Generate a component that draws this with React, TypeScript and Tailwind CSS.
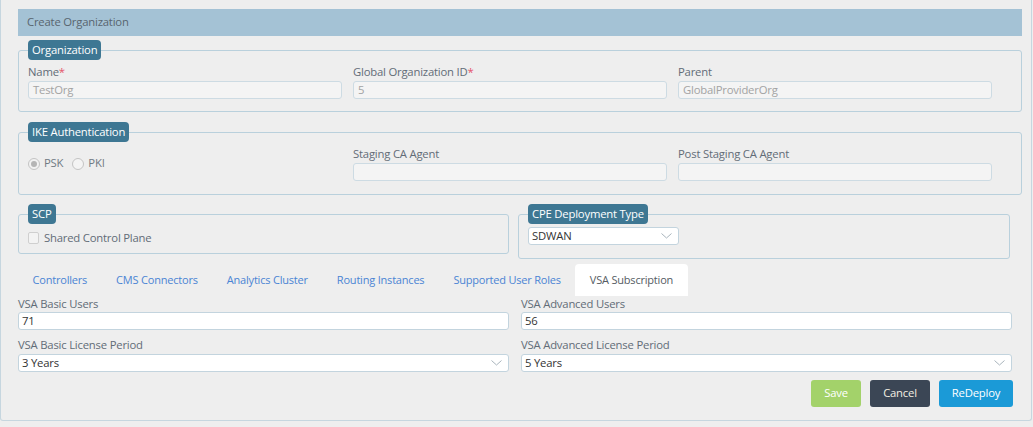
import { ReactNode } from "react";

const Legend = ({ children }: { children: ReactNode }) => (
  <legend className="h-[20px] px-[4px] rounded-[4px] bg-[#3e7793] text-white leading-[20px]">
    {children}
  </legend>
);

const Label = ({ text, required }: { text: string; required?: boolean }) => (
  <div className="h-[16px] leading-[16px] text-[#626c77] whitespace-nowrap">
    {text}
    {required && <span className="text-[#e5546b]">*</span>}
  </div>
);

const Chevron = () => (
  <svg width="11" height="6" viewBox="0 0 11 6" className="shrink-0">
    <polyline points="0.5,0.5 5.5,5 10.5,0.5" fill="none" stroke="#a9b4bc" strokeWidth="1" />
  </svg>
);

const DisabledInput = ({ value }: { value?: string }) => (
  <div className="mt-[1px] h-[18px] rounded-[3px] border border-[#cddbe3] bg-[#f4f4f4] px-[4px] leading-[16px] text-[#a3a3a3]">
    {value}
  </div>
);

const TextInput = ({ value }: { value: string }) => (
  <div className="h-[18px] rounded-[3px] border border-[#c3d4de] bg-white px-[3px] leading-[16px] text-[#333]">
    {value}
  </div>
);

const SelectBox = ({ value, className }: { value: string; className?: string }) => (
  <div
    className={`flex h-[18px] items-center justify-between rounded-[3px] border border-[#c3d4de] bg-white pl-[3px] pr-[6px] leading-[16px] text-[#333] ${className ?? ""}`}
  >
    <span>{value}</span>
    <Chevron />
  </div>
);

const tabs = ["Controllers", "CMS Connectors", "Analytics Cluster", "Routing Instances", "Supported User Roles"];

const App = () => {
  return (
    <div className="h-[427px] w-[1033px] bg-[#eeeeee] font-['Open_Sans',sans-serif] text-[11.3px] tracking-[-0.2px]">
      <div className="h-[421px] w-[1032px] rounded-b-[3px] border-x border-b border-[#c6d6df] pl-[17px] pr-[9px] pt-[9px]">
        <div className="flex h-[27px] items-center bg-[#a4c2d5] pl-[9px] text-[#58656f]">Create Organization</div>

        <fieldset className="mt-[4px] rounded-[3px] border border-[#b9d0dc] px-[9px] pt-[4px] pb-[12px]">
          <Legend>Organization</Legend>
          <div className="flex gap-[11px]">
            <div className="w-[314px]">
              <Label text="Name" required />
              <DisabledInput value="TestOrg" />
            </div>
            <div className="w-[314px]">
              <Label text="Global Organization ID" required />
              <DisabledInput value="5" />
            </div>
            <div className="w-[314px]">
              <Label text="Parent" />
              <DisabledInput value="GlobalProviderOrg" />
            </div>
          </div>
        </fieldset>

        <fieldset className="mt-[10px] rounded-[3px] border border-[#b9d0dc] px-[9px] pt-[4px] pb-[13px]">
          <Legend>IKE Authentication</Legend>
          <div className="flex gap-[11px]">
            <div className="flex w-[314px] items-center gap-[4px] text-[#707a83]">
              <span className="flex h-[12px] w-[12px] items-center justify-center rounded-full border border-[#c4c4c4] bg-[#f2f2f2]">
                <span className="h-[6px] w-[6px] rounded-full bg-[#b5b5b5]" />
              </span>
              <span className="mr-[5px]">PSK</span>
              <span className="h-[12px] w-[12px] rounded-full border border-[#c4c4c4] bg-[#f4f4f4]" />
              <span>PKI</span>
            </div>
            <div className="w-[314px]">
              <Label text="Staging CA Agent" />
              <DisabledInput />
            </div>
            <div className="w-[314px]">
              <Label text="Post Staging CA Agent" />
              <DisabledInput />
            </div>
          </div>
        </fieldset>

        <div className="mt-[9px] flex items-start gap-[9px]">
          <fieldset className="w-[491px] rounded-[3px] border border-[#b9d0dc] px-[9px] pt-[5px] pb-[6px]">
            <Legend>SCP</Legend>
            <div className="flex h-[18px] items-center gap-[5px] text-[#626c77]">
              <span className="h-[12px] w-[11px] rounded-[2px] border border-[#cfcfcf] bg-[#f3f3f3]" />
              <span>Shared Control Plane</span>
            </div>
          </fieldset>
          <fieldset className="w-[492px] rounded-[3px] border border-[#b9d0dc] px-[9px] pt-[3px] pb-[13px]">
            <Legend>CPE Deployment Type</Legend>
            <SelectBox value="SDWAN" className="w-[151px]" />
          </fieldset>
        </div>

        <div className="mt-[5px] flex h-[32px] text-[11px]">
          {tabs.map((t) => (
            <div key={t} className="px-[14.5px] leading-[32px] text-[#4a84d4]">
              {t}
            </div>
          ))}
          <div className="rounded-t-[4px] bg-white px-[14.5px] leading-[32px] text-[#555c63]">VSA Subscription</div>
        </div>

        <div className="flex gap-[12px]">
          <div className="w-[491px]">
            <Label text="VSA Basic Users" />
            <TextInput value="71" />
            <div className="mt-[7px]">
              <Label text="VSA Basic License Period" />
            </div>
            <SelectBox value="3 Years" className="mt-[1px]" />
          </div>
          <div className="w-[491px]">
            <Label text="VSA Advanced Users" />
            <TextInput value="56" />
            <div className="mt-[7px]">
              <Label text="VSA Advanced License Period" />
            </div>
            <SelectBox value="5 Years" className="mt-[1px]" />
          </div>
        </div>

        <div className="mt-[8px] flex justify-end gap-[9px] pr-[9px]">
          <button className="h-[27px] w-[50px] rounded-[3px] bg-[#a3d26a] text-white">Save</button>
          <button className="h-[27px] w-[60px] rounded-[3px] bg-[#3b4655] text-[#f4efe2]">Cancel</button>
          <button className="h-[27px] w-[74px] rounded-[3px] bg-[#1b9ad7] text-white">ReDeploy</button>
        </div>
      </div>
    </div>
  );
};

export default App;
